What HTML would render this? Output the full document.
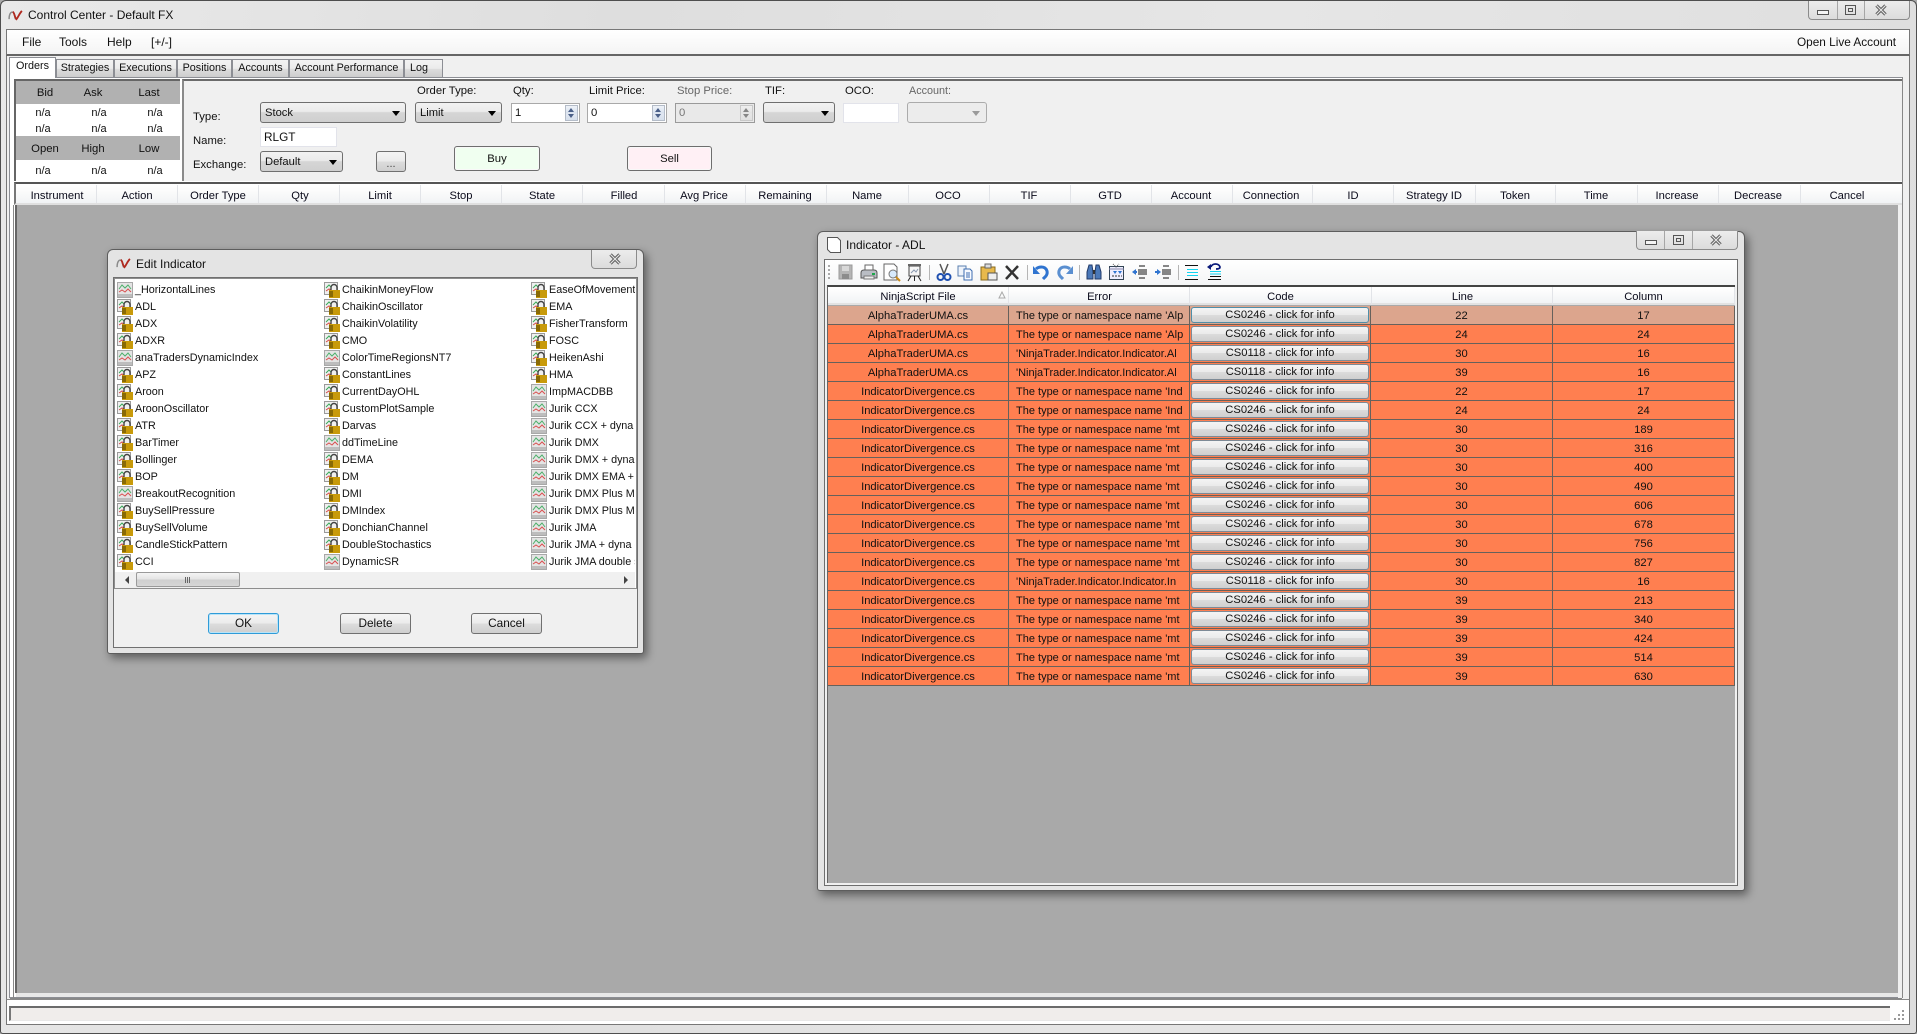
<!DOCTYPE html>
<html><head><meta charset="utf-8"><title>Control Center - Default FX</title>
<style>
*{box-sizing:border-box}
html,body{margin:0;padding:0;width:1917px;height:1034px;overflow:hidden;background:#a9a9a9}
body{position:relative;font:12px "Liberation Sans",sans-serif;color:#111}
.a{position:absolute}
.t{position:absolute;white-space:nowrap;line-height:14px;transform:translateY(-7px)}
.c{transform:translate(-50%,-7px)}
.s{font-size:11.3px;transform:translateY(-6px)}
.c.s{transform:translate(-50%,-6px)}
.n{font-size:11px}
.sel{position:absolute;border:1px solid #6f6f6f;border-radius:3px;background:linear-gradient(#f2f2f2,#ebebeb 45%,#d6d6d6 50%,#cfcfcf);font-size:11.2px;line-height:20px;padding-left:4px}
.sel:after{content:"";position:absolute;right:5px;top:8px;border:4px solid transparent;border-top:5px solid #000;border-bottom:0}
.inp{position:absolute;background:#fff;border:1px solid #e2e3ea;font-size:11.5px;line-height:18px;padding-left:3px}
.spn{position:absolute;background:#fff;border:1px solid #a9a9a9;font-size:11.3px;line-height:18px;padding-left:3px}
.spn i{position:absolute;right:1px;top:1px;width:13px;height:16px;background:linear-gradient(#eef2f8 0,#dbe4f0 48%,#a9b5c9 50%,#e2e8f2 52%,#d6dfec);border:1px solid #b4bcc8}
.spn i:before{content:"";position:absolute;left:2px;top:2px;border:3px solid transparent;border-bottom:4px solid #4a5f88;border-top:0}
.spn i:after{content:"";position:absolute;left:2px;bottom:2px;border:3px solid transparent;border-top:4px solid #4a5f88;border-bottom:0}
.btn{position:absolute;border:1px solid #707070;border-radius:3px;background:linear-gradient(#f4f4f4,#ececec 48%,#dcdcdc 52%,#cfcfcf);text-align:center;font-size:11.8px}
.tab{position:absolute;top:59px;height:18px;border:1px solid #8c8e94;border-bottom:0;background:linear-gradient(#f3f3f3,#ebebeb 50%,#dcdcdc 55%,#cdcdcd);font-size:10.8px;line-height:17px;text-align:center;white-space:nowrap}
.hd{position:absolute;text-align:center;font-size:11.2px;color:#0a0a1a;white-space:nowrap}
.wbt{position:absolute;border:1px solid #8b8b8b;border-top:0;border-radius:0 0 4px 4px;background:linear-gradient(#ececec,#dcdcdc)}
.wbt b{position:absolute;top:0;bottom:0;width:1px;background:#a6a6a6}
.win{position:absolute;background:#e4e4e4;border:1px solid #5d5d5d;border-radius:6px 6px 3px 3px;box-shadow:3px 4px 9px rgba(0,0,0,.45)}
.col{position:absolute;width:200px}
.li{height:17px;position:relative;font-size:10.8px;line-height:17px;padding-left:18px;white-space:nowrap}
.li svg{position:absolute;left:0;top:0;width:16px;height:16px}
.row{position:absolute;left:0;width:908px;height:19px;background:#ff7f50;border-bottom:1px solid #66615c;font-size:11.2px;line-height:20px;white-space:nowrap}
.row:after{content:"";position:absolute;left:542px;top:0;width:1px;height:18px;background:#66615c}
.row.f{background:#dca58d}
.row span{position:absolute;top:0;height:18px;text-align:center;overflow:hidden;border-right:1px solid #66615c}
.row .e{left:181px;width:181px;padding-left:7px;text-align:left;font-size:11px}
.row .x{left:0;width:181px}
.row .l{left:543px;width:182px}
.row .o{left:725px;width:182px}
.row .b{position:absolute;left:363px;top:1px;width:178px;height:16px;border:1px solid #7d8a96;border-radius:3px;background:linear-gradient(#f4f4f4,#ebebeb 48%,#dbdbdb 52%,#cfcfcf);text-align:center;line-height:15px;color:#111}
.row.f .b{border-color:#4f8ea8}
</style></head>
<body>
<svg width="0" height="0" style="position:absolute"><defs>
<symbol id="chart" viewBox="0 0 16 16"><rect x=".5" y=".5" width="15" height="15" fill="#e4e4e4" stroke="#a8a8a8"/><rect x="1" y="12" width="14" height="3" fill="#bdbdbd"/><path d="M2 7l3-4 3 3 3-3 3 4" fill="none" stroke="#4caf6a"/><path d="M2 10l3-2 3 2 3-3 3 3" fill="none" stroke="#d85050"/></symbol>
<symbol id="lock" viewBox="0 0 16 16"><rect x=".5" y=".5" width="13" height="12" fill="#f0f0f0" stroke="#9a9a9a"/><path d="M2 6l3-3 2 2" fill="none" stroke="#3aa85a"/><path d="M2 9l3-2 2 1" fill="none" stroke="#d24a4a"/><path d="M7 8V5.5a3 3 0 016 0V8" fill="none" stroke="#444" stroke-width="1.4"/><rect x="5" y="8" width="11" height="8" fill="#c89a0a"/><path d="M5 10h4M5 12h4M5 14h4" stroke="#4a3a00"/></symbol>
<symbol id="logo" viewBox="0 0 16 12"><path d="M1 10C1 3 4 1 6 3c1 1 1 5 2 7" fill="none" stroke="#8a8a8a" stroke-width="1.6"/><path d="M5 2c2 1 2 6 4 8 2-2 3-6 6-9" fill="none" stroke="#b0291f" stroke-width="2"/></symbol>
<symbol id="wx" viewBox="0 0 12 12"><path d="M1.500 1.500l9 9M10.500 1.500l-9 9" stroke="#5c5c5c" stroke-width="3.200" fill="none"/><path d="M1.500 1.500l9 9M10.500 1.500l-9 9" stroke="#e6e6e6" stroke-width="1.200" fill="none"/></symbol>
</defs></svg>

<!-- main window frame -->
<div class="a" style="left:0;top:0;width:1917px;height:1034px;background:linear-gradient(100deg,#e9e9e9,#dedede 30%,#e6e6e6 60%,#dddddd);border:1px solid #4e4e4e;border-radius:6px 6px 3px 3px"></div>
<svg class="a" style="left:8px;top:10px" width="15" height="11"><use href="#logo"/></svg>
<div class="t" style="left:28px;top:15px">Control Center - Default FX</div>
<div class="wbt" style="left:1808px;top:1px;width:102px;height:19px"><b style="left:28px"></b><b style="left:55px"></b>
<svg class="a" style="left:0;top:0" width="100" height="18"><rect x="8.500" y="9.500" width="11" height="4" fill="#f4f4f4" stroke="#555"/><rect x="36.500" y="4.500" width="10" height="9" fill="none" stroke="#555"/><rect x="39.500" y="7.500" width="4" height="3" fill="none" stroke="#555"/><use href="#wx" x="66" y="3" width="12" height="12"/></svg></div>

<!-- client -->
<div class="a" style="left:6px;top:29px;width:1904px;height:996px;background:#f0f0f0;border:1px solid #777"></div>
<div class="a" style="left:6px;top:29px;width:1904px;height:27px;background:linear-gradient(#fff,#f4f4f4);border:1px solid #777;border-bottom:2px solid #666"></div>
<div class="t" style="left:22px;top:42px">File</div>
<div class="t" style="left:59px;top:42px">Tools</div>
<div class="t" style="left:107px;top:42px">Help</div>
<div class="t" style="left:151px;top:42px">[+/-]</div>
<div class="t" style="left:1797px;top:42px;font-size:11.8px">Open Live Account</div>

<!-- tabs -->
<div class="tab" style="left:56px;width:58px">Strategies</div>
<div class="tab" style="left:114px;width:63px">Executions</div>
<div class="tab" style="left:177px;width:55px">Positions</div>
<div class="tab" style="left:232px;width:57px">Accounts</div>
<div class="tab" style="left:289px;width:115px">Account Performance</div>
<div class="tab" style="left:404px;width:39px;text-align:left;padding-left:5px">Log</div>
<div class="a" style="left:9px;top:77px;width:1894px;height:921px;background:#fff;border:1px solid #8c8e94"></div>
<div class="a" style="left:9px;top:57px;width:47px;height:21px;background:#fff;border:1px solid #8c8e94;border-bottom:0;font-size:10.8px;line-height:17px;text-align:center">Orders</div>

<!-- quote box -->
<div class="a" style="left:14px;top:79px;width:166px;height:102px;background:#fff;border-top:2px solid #666;border-left:2px solid #666"></div>
<div class="a" style="left:16px;top:81px;width:164px;height:23px;background:#b1b1b1"></div>
<div class="a" style="left:16px;top:136px;width:164px;height:24px;background:#b1b1b1"></div>
<div class="t c s" style="left:45px;top:92px">Bid</div><div class="t c s" style="left:93px;top:92px">Ask</div><div class="t c s" style="left:149px;top:92px">Last</div>
<div class="t c s n" style="left:43px;top:112px">n/a</div><div class="t c s n" style="left:99px;top:112px">n/a</div><div class="t c s n" style="left:155px;top:112px">n/a</div>
<div class="t c s n" style="left:43px;top:128px">n/a</div><div class="t c s n" style="left:99px;top:128px">n/a</div><div class="t c s n" style="left:155px;top:128px">n/a</div>
<div class="t c s" style="left:45px;top:148px">Open</div><div class="t c s" style="left:93px;top:148px">High</div><div class="t c s" style="left:149px;top:148px">Low</div>
<div class="t c s n" style="left:43px;top:170px">n/a</div><div class="t c s n" style="left:99px;top:170px">n/a</div><div class="t c s n" style="left:155px;top:170px">n/a</div>

<!-- order entry -->
<div class="a" style="left:182px;top:79px;width:1720px;height:102px;background:#f0f0f0;border-top:2px solid #6b6b6b;border-left:2px solid #8a8a8a"></div>
<div class="t s" style="left:193px;top:116px">Type:</div>
<div class="t s" style="left:193px;top:140px">Name:</div>
<div class="t s" style="left:193px;top:164px">Exchange:</div>
<div class="t s" style="left:417px;top:90px">Order Type:</div>
<div class="t s" style="left:513px;top:90px">Qty:</div>
<div class="t s" style="left:589px;top:90px">Limit Price:</div>
<div class="t s" style="left:677px;top:90px;color:#666">Stop Price:</div>
<div class="t s" style="left:765px;top:90px">TIF:</div>
<div class="t s" style="left:845px;top:90px">OCO:</div>
<div class="t s" style="left:909px;top:90px;font-size:10.8px;color:#666">Account:</div>
<div class="sel" style="left:260px;top:102px;width:146px;height:21px">Stock</div>
<div class="sel" style="left:415px;top:102px;width:87px;height:21px">Limit</div>
<div class="spn" style="left:511px;top:103px;width:69px;height:20px">1<i></i></div>
<div class="spn" style="left:587px;top:103px;width:80px;height:20px">0<i></i></div>
<div class="spn" style="left:675px;top:103px;width:80px;height:20px;background:#e9e9e9;color:#777;border-color:#9a9a9a">0<i style="filter:grayscale(1);opacity:.7"></i></div>
<div class="sel" style="left:763px;top:102px;width:72px;height:21px"></div>
<div class="inp" style="left:843px;top:103px;width:56px;height:20px"></div>
<div class="a" style="left:907px;top:102px;width:80px;height:21px;border:1px solid #ababab;border-radius:3px;background:#ececec"><div class="a" style="right:6px;top:8px;border:4px solid transparent;border-top:5px solid #9a9a9a;border-bottom:0"></div></div>
<div class="inp" style="left:260px;top:127px;width:77px;height:20px;font-size:11.8px">RLGT</div>
<div class="sel" style="left:260px;top:151px;width:83px;height:21px">Default</div>
<div class="btn" style="left:376px;top:151px;width:30px;height:21px;line-height:24px;font-size:11px;color:#444">...</div>
<div class="btn" style="left:454px;top:146px;width:86px;height:25px;background:#f0fff0;line-height:24px;font-size:11.3px;border:1px solid #6e6e6e;box-shadow:inset 0 0 0 1px #f8f8f8">Buy</div>
<div class="btn" style="left:627px;top:146px;width:85px;height:25px;background:#fff0f5;line-height:24px;font-size:11.3px;border:1px solid #6e6e6e;box-shadow:inset 0 0 0 1px #f8f8f8">Sell</div>

<!-- orders grid header -->
<div class="a" style="left:14px;top:182px;width:1888px;height:23px;background:linear-gradient(#fff,#fbfbfb 40%,#f1f3f5);border-top:2px solid #555;border-left:2px solid #777;border-bottom:2px solid #e0e0e0"></div>
<div class="a" style="left:15px;top:205px;width:1883px;height:788px;background:#a9a9a9;border-left:2px solid #666"></div>
<div class="a" style="left:16px;top:993px;width:1883px;height:4px;background:#e8e8e8"></div>
<div class="a" style="left:10px;top:998px;width:1892px;height:1px;background:#888"></div>
<svg class="a" style="left:0;top:184px" width="1917" height="20"><path d="M96.500 1v18M177.500 1v18M258.500 1v18M339.500 1v18M420.500 1v18M501.500 1v18M582.500 1v18M664.500 1v18M745.500 1v18M826.500 1v18M908.500 1v18M989.500 1v18M1070.500 1v18M1151.500 1v18M1232.500 1v18M1312.500 1v18M1393.500 1v18M1475.500 1v18M1555.500 1v18M1637.500 1v18M1718.500 1v18M1800.500 1v18" stroke="#e2e4e8"/></svg>
<div class="t c s hd" style="left:57px;top:195px;font-size:11.2px">Instrument</div>
<div class="t c s hd" style="left:137px;top:195px;font-size:11.2px">Action</div>
<div class="t c s hd" style="left:218px;top:195px;font-size:11.2px">Order Type</div>
<div class="t c s hd" style="left:300px;top:195px;font-size:11.2px">Qty</div>
<div class="t c s hd" style="left:380px;top:195px;font-size:11.2px">Limit</div>
<div class="t c s hd" style="left:461px;top:195px;font-size:11.2px">Stop</div>
<div class="t c s hd" style="left:542px;top:195px;font-size:11.2px">State</div>
<div class="t c s hd" style="left:624px;top:195px;font-size:11.2px">Filled</div>
<div class="t c s hd" style="left:704px;top:195px;font-size:11.2px">Avg Price</div>
<div class="t c s hd" style="left:785px;top:195px;font-size:11.2px">Remaining</div>
<div class="t c s hd" style="left:867px;top:195px;font-size:11.2px">Name</div>
<div class="t c s hd" style="left:948px;top:195px;font-size:11.2px">OCO</div>
<div class="t c s hd" style="left:1029px;top:195px;font-size:11.2px">TIF</div>
<div class="t c s hd" style="left:1110px;top:195px;font-size:11.2px">GTD</div>
<div class="t c s hd" style="left:1191px;top:195px;font-size:11.2px">Account</div>
<div class="t c s hd" style="left:1271px;top:195px;font-size:11.2px">Connection</div>
<div class="t c s hd" style="left:1353px;top:195px;font-size:11.2px">ID</div>
<div class="t c s hd" style="left:1434px;top:195px;font-size:11.2px">Strategy ID</div>
<div class="t c s hd" style="left:1515px;top:195px;font-size:11.2px">Token</div>
<div class="t c s hd" style="left:1596px;top:195px;font-size:11.2px">Time</div>
<div class="t c s hd" style="left:1677px;top:195px;font-size:11.2px">Increase</div>
<div class="t c s hd" style="left:1758px;top:195px;font-size:11.2px">Decrease</div>
<div class="t c s hd" style="left:1847px;top:195px;font-size:11.2px">Cancel</div>

<!-- right edge & bottom lines -->
<div class="a" style="left:1898px;top:205px;width:4px;height:793px;background:#f0f0f0"></div>
<div class="a" style="left:1902px;top:77px;width:1px;height:921px;background:#888"></div>
<div class="a" style="left:13px;top:205px;width:1px;height:793px;background:#888"></div>
<!-- status bar -->
<div class="a" style="left:6px;top:999px;width:1904px;height:26px;background:#fff;border:1px solid #777;border-top:1px solid #8a8a8a"></div>
<div class="a" style="left:9px;top:1006px;width:1881px;height:15px;background:#f0edeb;border-top:2px solid #6b6b6b;border-left:2px solid #777;border-bottom:1px solid #e8e8e8"></div>
<svg class="a" style="left:1893px;top:1009px" width="14" height="14"><path d="M9 1h2v2H9zM5 5h2v2H5zM9 5h2v2H9zM1 9h2v2H1zM5 9h2v2H5zM9 9h2v2H9z" fill="#999"/></svg>

<!-- Edit Indicator -->
<div class="win" style="left:107px;top:249px;width:537px;height:405px"></div>
<div class="wbt" style="left:591px;top:250px;width:46px;height:19px"><svg class="a" style="left:0;top:0" width="44" height="18"><use href="#wx" x="17" y="3" width="12" height="12"/></svg></div>
<svg class="a" style="left:116px;top:258px" width="15" height="11"><use href="#logo"/></svg>
<div class="t" style="left:136px;top:264px">Edit Indicator</div>
<div class="a" style="left:113px;top:277px;width:525px;height:371px;background:#f0f0f0;border:1px solid #707070"></div>
<div class="a" style="left:114px;top:278px;width:523px;height:311px;background:#fff;border:1px solid #8d8d8d;overflow:hidden"></div>
<div class="a" style="left:115px;top:279px;width:520px;height:293px;overflow:hidden;background:#fff">
<div class="col" style="left:2px;top:3px">
<div class="li"><svg><use href="#chart"/></svg>_HorizontalLines</div>
<div class="li"><svg><use href="#lock"/></svg>ADL</div>
<div class="li"><svg><use href="#lock"/></svg>ADX</div>
<div class="li"><svg><use href="#lock"/></svg>ADXR</div>
<div class="li"><svg><use href="#chart"/></svg>anaTradersDynamicIndex</div>
<div class="li"><svg><use href="#lock"/></svg>APZ</div>
<div class="li"><svg><use href="#lock"/></svg>Aroon</div>
<div class="li"><svg><use href="#lock"/></svg>AroonOscillator</div>
<div class="li"><svg><use href="#lock"/></svg>ATR</div>
<div class="li"><svg><use href="#lock"/></svg>BarTimer</div>
<div class="li"><svg><use href="#lock"/></svg>Bollinger</div>
<div class="li"><svg><use href="#lock"/></svg>BOP</div>
<div class="li"><svg><use href="#chart"/></svg>BreakoutRecognition</div>
<div class="li"><svg><use href="#lock"/></svg>BuySellPressure</div>
<div class="li"><svg><use href="#lock"/></svg>BuySellVolume</div>
<div class="li"><svg><use href="#lock"/></svg>CandleStickPattern</div>
<div class="li"><svg><use href="#lock"/></svg>CCI</div>
</div>
<div class="col" style="left:209px;top:3px">
<div class="li"><svg><use href="#lock"/></svg>ChaikinMoneyFlow</div>
<div class="li"><svg><use href="#lock"/></svg>ChaikinOscillator</div>
<div class="li"><svg><use href="#lock"/></svg>ChaikinVolatility</div>
<div class="li"><svg><use href="#lock"/></svg>CMO</div>
<div class="li"><svg><use href="#chart"/></svg>ColorTimeRegionsNT7</div>
<div class="li"><svg><use href="#lock"/></svg>ConstantLines</div>
<div class="li"><svg><use href="#lock"/></svg>CurrentDayOHL</div>
<div class="li"><svg><use href="#lock"/></svg>CustomPlotSample</div>
<div class="li"><svg><use href="#lock"/></svg>Darvas</div>
<div class="li"><svg><use href="#chart"/></svg>ddTimeLine</div>
<div class="li"><svg><use href="#lock"/></svg>DEMA</div>
<div class="li"><svg><use href="#lock"/></svg>DM</div>
<div class="li"><svg><use href="#lock"/></svg>DMI</div>
<div class="li"><svg><use href="#lock"/></svg>DMIndex</div>
<div class="li"><svg><use href="#lock"/></svg>DonchianChannel</div>
<div class="li"><svg><use href="#lock"/></svg>DoubleStochastics</div>
<div class="li"><svg><use href="#chart"/></svg>DynamicSR</div>
</div>
<div class="col" style="left:416px;top:3px;width:104px;overflow:hidden">
<div class="li"><svg><use href="#lock"/></svg>EaseOfMovement</div>
<div class="li"><svg><use href="#lock"/></svg>EMA</div>
<div class="li"><svg><use href="#lock"/></svg>FisherTransform</div>
<div class="li"><svg><use href="#lock"/></svg>FOSC</div>
<div class="li"><svg><use href="#lock"/></svg>HeikenAshi</div>
<div class="li"><svg><use href="#lock"/></svg>HMA</div>
<div class="li"><svg><use href="#chart"/></svg>ImpMACDBB</div>
<div class="li"><svg><use href="#chart"/></svg>Jurik CCX</div>
<div class="li"><svg><use href="#chart"/></svg>Jurik CCX + dyna obos</div>
<div class="li"><svg><use href="#chart"/></svg>Jurik DMX</div>
<div class="li"><svg><use href="#chart"/></svg>Jurik DMX + dyna obos</div>
<div class="li"><svg><use href="#chart"/></svg>Jurik DMX EMA + dyna</div>
<div class="li"><svg><use href="#chart"/></svg>Jurik DMX Plus Minus</div>
<div class="li"><svg><use href="#chart"/></svg>Jurik DMX Plus Minus</div>
<div class="li"><svg><use href="#chart"/></svg>Jurik JMA</div>
<div class="li"><svg><use href="#chart"/></svg>Jurik JMA + dyna obos</div>
<div class="li"><svg><use href="#chart"/></svg>Jurik JMA double smooth</div>
</div>
</div>
<div class="a" style="left:115px;top:572px;width:520px;height:16px;background:#f0f0f0"></div>
<div class="a" style="left:136px;top:572px;width:104px;height:15px;border:1px solid #9a9a9a;border-radius:2px;background:linear-gradient(#f4f4f4,#e4e4e4 48%,#cfcfcf 52%,#d6d6d6)"></div>
<svg class="a" style="left:120px;top:572px" width="514" height="16"><path d="M5 8l4-4v8z" fill="#444"/><path d="M504 4l4 4-4 4z" fill="#444"/><path d="M65.500 5v6M67.500 5v6M69.500 5v6" stroke="#666"/></svg>
<div class="btn" style="left:208px;top:613px;width:71px;height:21px;line-height:19px;border:1px solid #2f9bd8;box-shadow:inset 0 0 0 1px #b9e4f8">OK</div>
<div class="btn" style="left:340px;top:613px;width:71px;height:21px;line-height:19px">Delete</div>
<div class="btn" style="left:471px;top:613px;width:71px;height:21px;line-height:19px">Cancel</div>

<!-- Indicator window -->
<div class="win" style="left:817px;top:231px;width:928px;height:660px"></div>
<div class="wbt" style="left:1636px;top:231px;width:102px;height:19px"><b style="left:27px"></b><b style="left:55px"></b>
<svg class="a" style="left:0;top:0" width="100" height="18"><rect x="8.500" y="9.500" width="11" height="4" fill="#f4f4f4" stroke="#555"/><rect x="36.500" y="4.500" width="10" height="9" fill="none" stroke="#555"/><rect x="39.500" y="7.500" width="4" height="3" fill="none" stroke="#555"/><use href="#wx" x="73" y="3" width="12" height="12"/></svg></div>
<svg class="a" style="left:827px;top:237px" width="14" height="16"><path d="M.5 .5h10l3 3v12H3.500l-3-3z" fill="#fff" stroke="#555"/></svg>
<div class="t" style="left:846px;top:245px">Indicator - ADL</div>
<div class="a" style="left:824px;top:259px;width:914px;height:627px;background:#f0f0f0;border:1px solid #6e6e6e"></div>
<div class="a" style="left:825px;top:260px;width:912px;height:25px;background:linear-gradient(#fff,#f4f5f6)"></div>

<!-- toolbar icons -->
<svg class="a" style="left:825px;top:260px" width="412" height="25">
<path d="M3 5h2v2H3zM3 9h2v2H3zM3 13h2v2H3zM3 17h2v2H3z" fill="#aaa"/>
<path d="M104.500 5v15M202.500 5v15M254.500 5v15M353.500 5v15" stroke="#b5b5b5"/>
<!-- save -->
<path d="M14 5h13v14H14z" fill="#b5b5b5" stroke="#9a9a9a"/><path d="M17 6h7v5h-7z" fill="#d8d8d8"/><path d="M17 14h7v5h-7z" fill="#8c8c8c"/>
<!-- print -->
<path d="M36 13c0-2 1-3 3-3h10c2 0 3 1 3 3v5H36z" fill="#b9bdc4" stroke="#555"/><path d="M40 5h8v5h-8z" fill="#fff" stroke="#666"/><path d="M39 16h10v3H39z" fill="#eee" stroke="#777"/><path d="M47 13h3v2h-3z" fill="#1ca84a"/>
<!-- preview -->
<path d="M59 4h10l3 3v13H59z" fill="#fff" stroke="#666"/><circle cx="68" cy="14" r="4" fill="#d7eafc" stroke="#777"/><path d="M71 17l4 4" stroke="#c98a1a" stroke-width="2"/>
<!-- presentation -->
<path d="M84 6h11v10H84z" fill="#f6f6f6" stroke="#444"/><path d="M83 5h13" stroke="#666" stroke-width="2"/><path d="M86 16l-3 5M93 16l3 5M89.500 16v5" stroke="#222"/><path d="M86 13l3-3 2 2 2-3" fill="none" stroke="#8a9ab0"/>
<!-- cut -->
<path d="M115 4l4 10M123 4l-4 10" stroke="#555" stroke-width="1.500"/><circle cx="115.500" cy="17" r="3" fill="none" stroke="#1f50b0" stroke-width="2"/><circle cx="122.500" cy="17" r="3" fill="none" stroke="#1f50b0" stroke-width="2"/>
<!-- copy -->
<path d="M133 6h8v10h-8z" fill="#eef3fa" stroke="#5a7fb0"/><path d="M139 9h6l2 2v9h-8z" fill="#f7faff" stroke="#3c6cb0"/><path d="M141 13h4M141 15h4M141 17h4" stroke="#3c6cb0"/>
<!-- paste -->
<path d="M156 7h14v13h-14z" fill="#e8b94c" stroke="#8a6a1a"/><path d="M160 4h6v4h-6z" fill="#ddd" stroke="#666"/><path d="M163 13h9v7h-9z" fill="#eee" stroke="#555"/>
<!-- X -->
<path d="M181 6l12 13M193 6l-12 13" stroke="#333" stroke-width="2.500"/>
<!-- undo -->
<path d="M211 9c2-2 9-4 11 2 1 4-2 6-4 8" fill="none" stroke="#2f74d0" stroke-width="3"/><path d="M208 6v8h7z" fill="#2f74d0"/>
<!-- redo -->
<path d="M245 9c-2-2-9-4-11 2-1 4 2 6 4 8" fill="none" stroke="#5a8fd0" stroke-width="3"/><path d="M248 6v8h-7z" fill="#5a8fd0"/>
<!-- binoculars -->
<path d="M262 12l2-7h3l1 7v7h-6zM270 12l1-7h3l2 7v7h-6z" fill="#4a78b8" stroke="#223a68"/><path d="M268 10h2v4h-2z" fill="#333"/>
<!-- grid find -->
<rect x="284.500" y="6.500" width="14" height="13" fill="#eef" stroke="#345"/><path d="M284 9h15" stroke="#88a"/><path d="M288 4l3 3 3-3" fill="none" stroke="#555" stroke-dasharray="1 1"/><path d="M288 11l2 3 2-3zM293 11l2 3 2-3z" fill="#2f74d0"/><path d="M287 16h10" stroke="#333" stroke-dasharray="2 1"/>
<!-- outdent -->
<path d="M314 6h6M313 10h9M313 12h9M313 14h9M314 18h6" stroke="#111"/><path d="M307 12l4-3v6z" fill="#2f74d0"/><path d="M309 12h3" stroke="#2f74d0" stroke-width="2"/>
<!-- indent -->
<path d="M338 6h6M337 10h9M337 12h9M337 14h9M338 18h6" stroke="#111"/><path d="M336 12l-4-3v6z" fill="#2f74d0"/><path d="M330 12h3" stroke="#2f74d0" stroke-width="2"/>
<!-- comment -->
<path d="M360 5.500h13M360 19.500h13" stroke="#111"/><path d="M362 9.500h11M362 12.500h11M362 15.500h11" stroke="#12d4f0"/>
<!-- uncomment -->
<path d="M383 19.500h13M385 16.500h11" stroke="#111"/><path d="M385 11.500h11M385 14h11" stroke="#12d4f0"/><path d="M386 7c1-4 8-4 9 0 0 2-3 2-4 2" fill="none" stroke="#0a1a7a" stroke-width="1.800"/><path d="M382 7l4-3v6z" fill="#0a1a7a"/>
</svg>

<!-- error grid -->
<div class="a" style="left:827px;top:285px;width:908px;height:598px;background:#a9a9a9;border-top:2px solid #444;border-left:1px solid #666;overflow:hidden">
<div class="a" style="left:0;top:0;width:908px;height:18px;background:linear-gradient(#fff,#fcfcfc 30%,#f1f3f5);border-bottom:2px solid #e2e2e2"></div>
<svg class="a" style="left:0;top:0" width="908" height="18"><path d="M180.500 0v18M361.500 0v18M543.500 0v18M724.500 0v18M906.500 0v18" stroke="#e2e4e8"/><path d="M171 11l3-6 3 6z" fill="none" stroke="#aaa"/></svg>
<div class="hd" style="left:0;width:180px;top:3px;line-height:14px">NinjaScript File</div>
<div class="hd" style="left:181px;width:181px;top:3px;line-height:14px">Error</div>
<div class="hd" style="left:362px;width:181px;top:3px;line-height:14px">Code</div>
<div class="hd" style="left:544px;width:181px;top:3px;line-height:14px">Line</div>
<div class="hd" style="left:725px;width:181px;top:3px;line-height:14px">Column</div>

<div class="row f" style="top:19px"><span class="x">AlphaTraderUMA.cs</span><span class="e">The type or namespace name 'Alp</span><div class="b">CS0246 - click for info</div><span class="l">22</span><span class="o">17</span></div>
<div class="row" style="top:38px"><span class="x">AlphaTraderUMA.cs</span><span class="e">The type or namespace name 'Alp</span><div class="b">CS0246 - click for info</div><span class="l">24</span><span class="o">24</span></div>
<div class="row" style="top:57px"><span class="x">AlphaTraderUMA.cs</span><span class="e">'NinjaTrader.Indicator.Indicator.Al</span><div class="b">CS0118 - click for info</div><span class="l">30</span><span class="o">16</span></div>
<div class="row" style="top:76px"><span class="x">AlphaTraderUMA.cs</span><span class="e">'NinjaTrader.Indicator.Indicator.Al</span><div class="b">CS0118 - click for info</div><span class="l">39</span><span class="o">16</span></div>
<div class="row" style="top:95px"><span class="x">IndicatorDivergence.cs</span><span class="e">The type or namespace name 'Ind</span><div class="b">CS0246 - click for info</div><span class="l">22</span><span class="o">17</span></div>
<div class="row" style="top:114px"><span class="x">IndicatorDivergence.cs</span><span class="e">The type or namespace name 'Ind</span><div class="b">CS0246 - click for info</div><span class="l">24</span><span class="o">24</span></div>
<div class="row" style="top:133px"><span class="x">IndicatorDivergence.cs</span><span class="e">The type or namespace name 'mt</span><div class="b">CS0246 - click for info</div><span class="l">30</span><span class="o">189</span></div>
<div class="row" style="top:152px"><span class="x">IndicatorDivergence.cs</span><span class="e">The type or namespace name 'mt</span><div class="b">CS0246 - click for info</div><span class="l">30</span><span class="o">316</span></div>
<div class="row" style="top:171px"><span class="x">IndicatorDivergence.cs</span><span class="e">The type or namespace name 'mt</span><div class="b">CS0246 - click for info</div><span class="l">30</span><span class="o">400</span></div>
<div class="row" style="top:190px"><span class="x">IndicatorDivergence.cs</span><span class="e">The type or namespace name 'mt</span><div class="b">CS0246 - click for info</div><span class="l">30</span><span class="o">490</span></div>
<div class="row" style="top:209px"><span class="x">IndicatorDivergence.cs</span><span class="e">The type or namespace name 'mt</span><div class="b">CS0246 - click for info</div><span class="l">30</span><span class="o">606</span></div>
<div class="row" style="top:228px"><span class="x">IndicatorDivergence.cs</span><span class="e">The type or namespace name 'mt</span><div class="b">CS0246 - click for info</div><span class="l">30</span><span class="o">678</span></div>
<div class="row" style="top:247px"><span class="x">IndicatorDivergence.cs</span><span class="e">The type or namespace name 'mt</span><div class="b">CS0246 - click for info</div><span class="l">30</span><span class="o">756</span></div>
<div class="row" style="top:266px"><span class="x">IndicatorDivergence.cs</span><span class="e">The type or namespace name 'mt</span><div class="b">CS0246 - click for info</div><span class="l">30</span><span class="o">827</span></div>
<div class="row" style="top:285px"><span class="x">IndicatorDivergence.cs</span><span class="e">'NinjaTrader.Indicator.Indicator.In</span><div class="b">CS0118 - click for info</div><span class="l">30</span><span class="o">16</span></div>
<div class="row" style="top:304px"><span class="x">IndicatorDivergence.cs</span><span class="e">The type or namespace name 'mt</span><div class="b">CS0246 - click for info</div><span class="l">39</span><span class="o">213</span></div>
<div class="row" style="top:323px"><span class="x">IndicatorDivergence.cs</span><span class="e">The type or namespace name 'mt</span><div class="b">CS0246 - click for info</div><span class="l">39</span><span class="o">340</span></div>
<div class="row" style="top:342px"><span class="x">IndicatorDivergence.cs</span><span class="e">The type or namespace name 'mt</span><div class="b">CS0246 - click for info</div><span class="l">39</span><span class="o">424</span></div>
<div class="row" style="top:361px"><span class="x">IndicatorDivergence.cs</span><span class="e">The type or namespace name 'mt</span><div class="b">CS0246 - click for info</div><span class="l">39</span><span class="o">514</span></div>
<div class="row" style="top:380px"><span class="x">IndicatorDivergence.cs</span><span class="e">The type or namespace name 'mt</span><div class="b">CS0246 - click for info</div><span class="l">39</span><span class="o">630</span></div>
</div>
</body></html>
